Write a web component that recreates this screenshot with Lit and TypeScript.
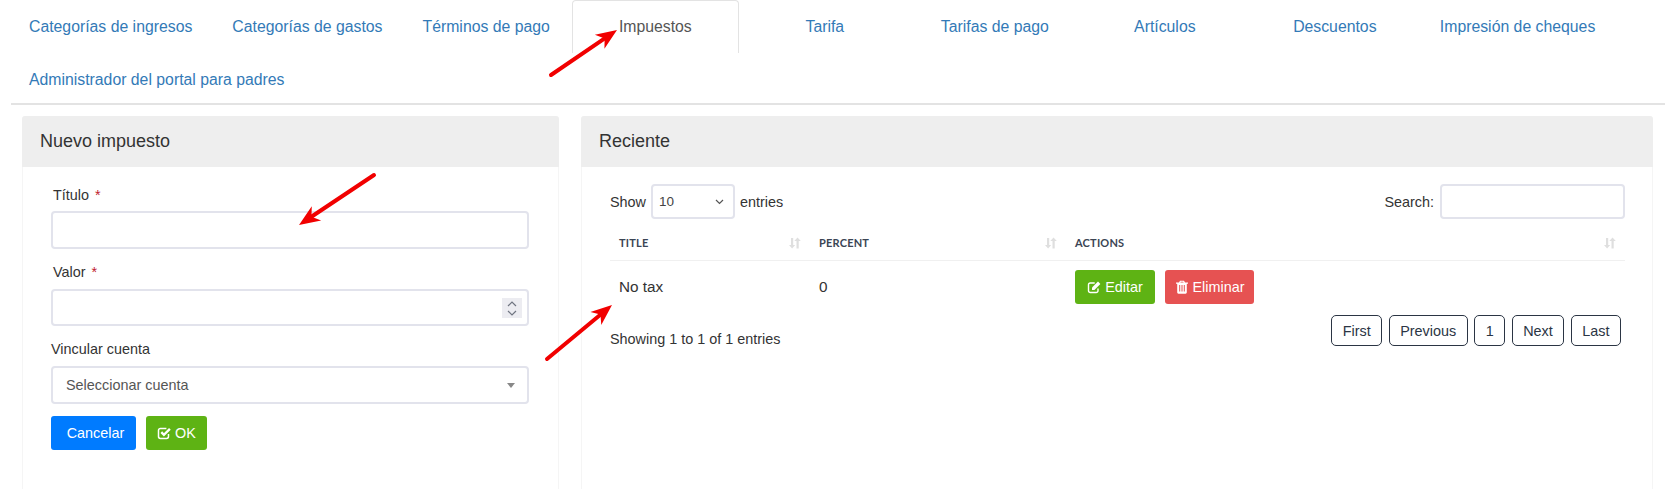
import { LitElement, html, css, svg } from "lit";
import { customElement } from "lit/decorators.js";

const TABS = ["Categorías de ingresos","Categorías de gastos","Términos de pago","Impuestos","Tarifa","Tarifas de pago","Artículos","Descuentos","Impresión de cheques","Administrador del portal para padres"];
const WIDE = new Set(["Impuestos","Tarifa","Tarifas de pago","Artículos","Descuentos"]);

const checkIcon = html`<svg class="ico" viewBox="0 0 14 14"><path fill="none" stroke="currentColor" stroke-width="1.5" d="M11.5 8v2.600a1.900 1.900 0 0 1-1.900 1.900H3.400a1.900 1.900 0 0 1-1.900-1.900V4.400a1.900 1.900 0 0 1 1.900-1.900h6"/><path fill="none" stroke="currentColor" stroke-width="2.400" d="M4.300 6.200l2.600 2.600 6-6"/></svg>`;
const editIcon = html`<svg class="ico" viewBox="0 0 14 14"><path fill="none" stroke="currentColor" stroke-width="1.400" d="M11 8.500v2.200a1.800 1.800 0 0 1-1.800 1.800H3.300a1.800 1.800 0 0 1-1.800-1.800V4.800A1.800 1.800 0 0 1 3.300 3h4.400"/><path fill="currentColor" d="M5 7.600L11 1.600l2.400 2.400-6 6H5z"/></svg>`;
const trashIcon = html`<svg class="ico" viewBox="0 0 14 14"><path fill="currentColor" fill-rule="evenodd" d="M5 .8h4l1 1.700h3v1.200h-1.200v8.600c0 .8-.5 1.400-1.200 1.400H3.400c-.7 0-1.200-.6-1.200-1.400V3.700H1V2.500h3zM5.400 2.500h3.200l-.4-.7H5.800zM4.200 5v6.500h1V5zM6.500 5v6.500h1V5zM8.800 5v6.500h1V5z"/></svg>`;
const sortIcon = html`<svg class="sort" viewBox="0 0 12 12"><path fill="currentColor" d="M2 1h2.200v7h2L3.100 11.500 0 8h2zM8.500.5L11.800 4H9.700v7.500H7.500V4H5.300z"/></svg>`;

const arrow = (x1: number, y1: number, x2: number, y2: number) => {
  const a = Math.atan2(y2 - y1, x2 - x1);
  const p = (d: number, o: number) => `${x2 - Math.cos(a) * d - Math.sin(a) * o},${y2 - Math.sin(a) * d + Math.cos(a) * o}`;
  return svg`<line x1=${x1} y1=${y1} x2=${x2 - Math.cos(a) * 14} y2=${y2 - Math.sin(a) * 14} stroke="#f10000" stroke-width="4" stroke-linecap="round"/>
  <polygon fill="#f10000" points="${x2},${y2} ${p(21, 8.500)} ${p(15, 0)} ${p(21, -8.500)}"/>`;
};

@customElement("app-root")
export class AppRoot extends LitElement {
  static styles = css`
    :host { display: block; height: 489px; overflow: hidden; position: relative; background: #fff; font-family: "Liberation Sans", Arial, sans-serif; color: #333; font-size: 14.4px; }
    * { box-sizing: border-box; }
    .tabs { display: flex; flex-wrap: wrap; margin: 0 7px 0 11px; height: 105px; border-bottom: 2px solid #e3e3e3; align-content: flex-start; }
    .tab { height: 53px; padding: 0 17px; margin-right: 4px; display: flex; align-items: center; justify-content: center; color: #337ab7; font-size: 15.8px; border: 1px solid transparent; border-bottom: 0; }
    .tab.wide { min-width: 166px; }
    .tab.active { color: #555; border-color: #e3e3e3; border-radius: 4px 4px 0 0; min-width: 167px; margin-right: 3px; }
    .cols { display: flex; gap: 22px; margin: 11px 19px 0 22px; }
    .panel { border: 1px solid #f5f5f5; border-radius: 4px 4px 0 0; height: 400px; }
    .left { width: 537px; flex: none; }
    .right { flex: 1; }
    .head { height: 51px; margin: -1px -1px 0; background: #eee; border-radius: 3px 3px 0 0; display: flex; align-items: center; padding-left: 18px; font-size: 18px; color: #333; }
    .form { padding: 16px 28px 0; }
    .lbl { height: 24px; display: flex; align-items: center; color: #333; margin-bottom: 5px; }
    .lbl.first { margin-bottom: 4px; }
    .lbl.in { padding-left: 2px; }
    .req { color: #c0212d; margin-left: 6px; }
    .field { height: 37px; border: 2px solid #e2e3ec; border-radius: 4px; background: #fff; display: flex; align-items: center; width: 478px; margin-bottom: 11px; }
    .field.first { height: 38px; margin-bottom: 11px; }
    .field.sel { height: 38px; padding: 0 12px 0 13px; color: #555; justify-content: space-between; margin-bottom: 12px; }
    .field.num { justify-content: flex-end; padding-right: 5px; }
    .spin { width: 20px; height: 20px; background: #ececf1; display: block; }
    .caret { width: 0; height: 0; border: 4px solid transparent; border-top: 5px solid #888; border-bottom: 0; }
    .btns { display: flex; gap: 10px; }
    .btn { height: 34px; border-radius: 3px; display: inline-flex; align-items: center; justify-content: center; color: #fff; font-size: 14.4px; gap: 4px; }
    .blue { background: #007bff; width: 85px; padding-left: 4px; }
    .green { background: #5eb314; }
    .ok { width: 61px; }
    .edit { width: 80px; }
    .red { background: #e65252; width: 89px; }
    .ico { width: 14px; height: 14px; display: block; }
    .body { padding: 17px 27px 0 28px; }
    .top { display: flex; justify-content: space-between; align-items: center; height: 35px; }
    .group { display: flex; align-items: center; }
    .ctl { height: 35px; border: 2px solid #e2e3ec; border-radius: 4px; background: #fff; }
    .len { width: 84px; margin: 0 5px; display: flex; align-items: center; justify-content: space-between; padding: 0 9px 0 6px; font-size: 13.5px; color: #444; }
    .search { width: 185px; margin-left: 6px; }
    table { width: 100%; border-collapse: collapse; table-layout: fixed; margin-top: 7px; }
    th { height: 34px; text-align: left; font-size: 11px; font-family: Lato, "Liberation Sans", sans-serif; font-weight: 700; color: #3b4554; padding: 0 9px; border-bottom: 1px solid #f0f0f0; letter-spacing: 0.2px; }
    th > div { display: flex; align-items: center; justify-content: space-between; }
    .sort { width: 12px; height: 12px; color: #dfdfdf; display: block; }
    td { height: 53px; padding: 0 9px; font-size: 15.3px; color: #333; }
    .acts { display: flex; gap: 10px; }
    .foot { display: flex; justify-content: space-between; align-items: flex-start; margin-top: 2px; padding-right: 4px; }
    .info { margin-top: 16px; color: #333; }
    .pages { display: flex; gap: 6.5px; }
    .pg { height: 31px; border: 1px solid #2b3544; border-radius: 5px; padding: 0 10.5px; display: flex; align-items: center; color: #2b3544; font-size: 14.4px; }
    .overlay { position: absolute; inset: 0; width: 1672px; height: 489px; pointer-events: none; }
  `;
  render() {
    return html`
      <div class="tabs">
        ${TABS.map(t => html`<div class="tab ${WIDE.has(t) ? "wide" : ""} ${t === "Impuestos" ? "active" : ""}">${t}</div>`)}
      </div>
      <div class="cols">
        <section class="panel left">
          <div class="head">Nuevo impuesto</div>
          <div class="form">
            <div class="lbl in first">Título <span class="req">*</span></div>
            <div class="field first"></div>
            <div class="lbl in">Valor <span class="req">*</span></div>
            <div class="field num">
              <svg class="spin" viewBox="0 0 20 20"><path fill="none" stroke="#6f7480" stroke-width="1.200" d="M6 8l4-4 4 4M6 13l4 4 4-4"/></svg>
            </div>
            <div class="lbl">Vincular cuenta</div>
            <div class="field sel"><span>Seleccionar cuenta</span><span class="caret"></span></div>
            <div class="btns">
              <div class="btn blue">Cancelar</div>
              <div class="btn green ok">${checkIcon}OK</div>
            </div>
          </div>
        </section>
        <section class="panel right">
          <div class="head">Reciente</div>
          <div class="body">
            <div class="top">
              <div class="group">Show
                <div class="ctl len"><span>10</span>
                  <svg width="9" height="6" viewBox="0 0 9 6"><path fill="none" stroke="#555" stroke-width="1.200" d="M1 1l3.500 3.500L8 1"/></svg>
                </div>entries</div>
              <div class="group">Search:<div class="ctl search"></div></div>
            </div>
            <table>
              <colgroup><col style="width:200px"/><col style="width:256px"/><col/></colgroup>
              <thead><tr>
                <th><div>TITLE ${sortIcon}</div></th>
                <th><div>PERCENT ${sortIcon}</div></th>
                <th><div>ACTIONS ${sortIcon}</div></th>
              </tr></thead>
              <tbody><tr>
                <td>No tax</td><td>0</td>
                <td><div class="acts">
                  <div class="btn green edit">${editIcon}Editar</div>
                  <div class="btn red">${trashIcon}Eliminar</div>
                </div></td>
              </tr></tbody>
            </table>
            <div class="foot">
              <div class="info">Showing 1 to 1 of 1 entries</div>
              <div class="pages">
                ${["First","Previous","1","Next","Last"].map(p => html`<div class="pg">${p}</div>`)}
              </div>
            </div>
          </div>
        </section>
      </div>
      <svg class="overlay" viewBox="0 0 1672 489">
        ${arrow(551, 75, 617, 30)}
        ${arrow(374, 175, 299, 225)}
        ${arrow(547, 359, 612, 305)}
      </svg>
    `;
  }
}
